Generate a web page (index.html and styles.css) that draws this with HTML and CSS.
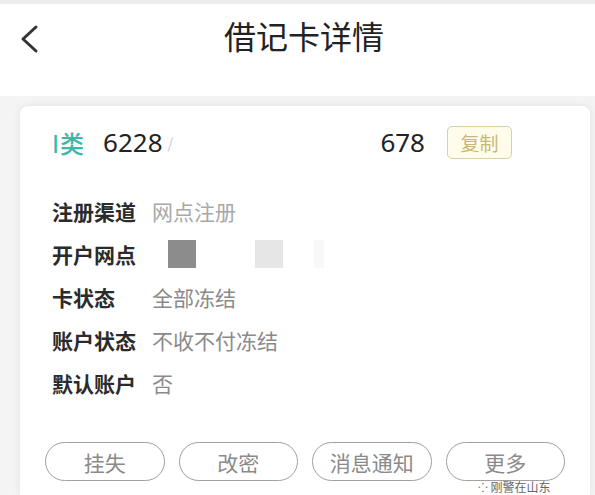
FILE: index.html
```html
<!DOCTYPE html>
<html lang="zh-CN">
<head>
  <meta charset="UTF-8">
  <meta name="viewport" content="width=device-width, initial-scale=1.0">
  <title>借记卡详情</title>
  <link rel="stylesheet" href="styles.css">
</head>
<body>
  <div class="status-strip"></div>

  <header class="nav">
    <span class="nav-back">
      <svg width="22" height="30" viewBox="0 0 22 30">
        <path d="M18 3 L5 15 L18 27" fill="none" stroke="#333" stroke-width="3" stroke-linecap="round" stroke-linejoin="round"/>
      </svg>
    </span>
    <h1 class="nav-title">借记卡详情</h1>
  </header>

  <div class="card">
    <div class="card-head">
      <span class="card-type"><span class="card-type-i">I</span>类</span>
      <span class="card-no">6228</span>
      <span class="card-mask">/</span>
      <span class="card-spacer"></span>
      <span class="card-no">678</span>
      <button class="copy-btn">复制</button>
    </div>

    <div class="info-list">
      <div class="info-row">
        <span class="info-label">注册渠道</span>
        <span class="info-value faded">网点注册</span>
      </div>
      <div class="info-row">
        <span class="info-label">开户网点</span>
        <span class="info-value">
          <span class="mosaic dark"></span>
          <span class="mosaic light"></span>
          <span class="mosaic faint"></span>
        </span>
      </div>
      <div class="info-row">
        <span class="info-label">卡状态</span>
        <span class="info-value">全部冻结</span>
      </div>
      <div class="info-row">
        <span class="info-label">账户状态</span>
        <span class="info-value">不收不付冻结</span>
      </div>
      <div class="info-row">
        <span class="info-label">默认账户</span>
        <span class="info-value">否</span>
      </div>
    </div>

    <div class="actions">
      <button class="action-btn">挂失</button>
      <button class="action-btn">改密</button>
      <button class="action-btn">消息通知</button>
      <button class="action-btn">更多</button>
    </div>
  </div>

  <div class="watermark">⁘ 刚警在山东</div>
</body>
</html>
```

FILE: styles.css
```css
:root {
  --bg-page: #f4f4f4;
  --text-main: #222;
  --text-label: #2b2b2b;
  --text-value: #8a8a8a;
  --accent-teal: #3cb7a6;
  --copy-border: #d9d0a4;
  --copy-bg: #fffcec;
  --copy-text: #c9b873;
  --btn-border: #a0a0a0;
}

* {
  box-sizing: border-box;
  margin: 0;
  padding: 0;
}

body {
  font-family: "Noto Sans CJK SC", "Noto Sans", sans-serif;
  background-color: var(--bg-page);
  color: var(--text-main);
  width: 595px;
  height: 495px;
  overflow: hidden;
  position: relative;
}

.status-strip {
  height: 4px;
  background-color: #ececec;
}

.nav {
  height: 92px;
  background-color: #fff;
  padding-top: 8px;
  display: flex;
  justify-content: center;
  align-items: flex-start;
  position: relative;
}

.nav-back {
  position: absolute;
  left: 18px;
  top: 20px;
}

.nav-title {
  font-size: 32px;
  font-weight: 400;
  line-height: 46px;
  color: var(--text-main);
  margin-left: 13px;
}

/* card runs to the bottom edge of the screen */
.card {
  margin: 10px 5px 0 20px;
  height: 389px;
  background-color: #fff;
  border-radius: 8px 8px 0 0;
  box-shadow: 0 0 8px rgba(0, 0, 0, 0.08);
  padding: 19px 32px 0 32px;
}

.card-head {
  display: flex;
  align-items: center;
  height: 34px;
}

.card-type {
  font-size: 24px;
  color: var(--accent-teal);
  font-weight: 500;
}

.card-type-i {
  font-family: "DejaVu Sans", sans-serif;
  font-weight: 400;
  margin-right: 1px;
}

.card-no {
  font-family: "Noto Sans", sans-serif;
  font-size: 26px;
  color: var(--text-main);
  margin-left: 19px;
}

.card-mask {
  font-size: 15px;
  color: #ccc;
  margin-left: 5px;
}

.card-spacer {
  flex: 1;
}

.copy-btn {
  font-family: inherit;
  font-size: 19px;
  color: var(--copy-text);
  background-color: var(--copy-bg);
  border: 1.5px solid var(--copy-border);
  border-radius: 5px;
  width: 65px;
  height: 33px;
  margin-left: 22px;
  margin-right: 46px;
}

.info-list {
  margin-top: 30px;
}

.info-row {
  display: flex;
  align-items: center;
  height: 43px;
  font-size: 21px;
}

.info-label {
  width: 100px;
  font-weight: 700;
  color: var(--text-label);
}

.info-value {
  color: var(--text-value);
  display: flex;
  align-items: center;
}

.info-value.faded {
  color: #a8a8a8;
}

.mosaic {
  display: inline-block;
  width: 28px;
  height: 28px;
}

.mosaic.dark {
  background-color: #8c8c8c;
  margin-left: 16px;
}

.mosaic.light {
  background-color: #e6e6e6;
  margin-left: 59px;
}

.mosaic.faint {
  background-color: #f8f8f8;
  width: 10px;
  margin-left: 31px;
}

.actions {
  display: flex;
  gap: 14px;
  margin: 38px 0 0 -7px;
  width: 520px;
}

.action-btn {
  flex: 1;
  height: 39px;
  font-family: inherit;
  font-size: 21px;
  color: var(--text-value);
  background-color: #fff;
  border: 1.5px solid var(--btn-border);
  border-radius: 20px;
}

.watermark {
  position: absolute;
  left: 478px;
  top: 480px;
  font-size: 12px;
  line-height: 14px;
  color: #666;
  white-space: nowrap;
}
```
